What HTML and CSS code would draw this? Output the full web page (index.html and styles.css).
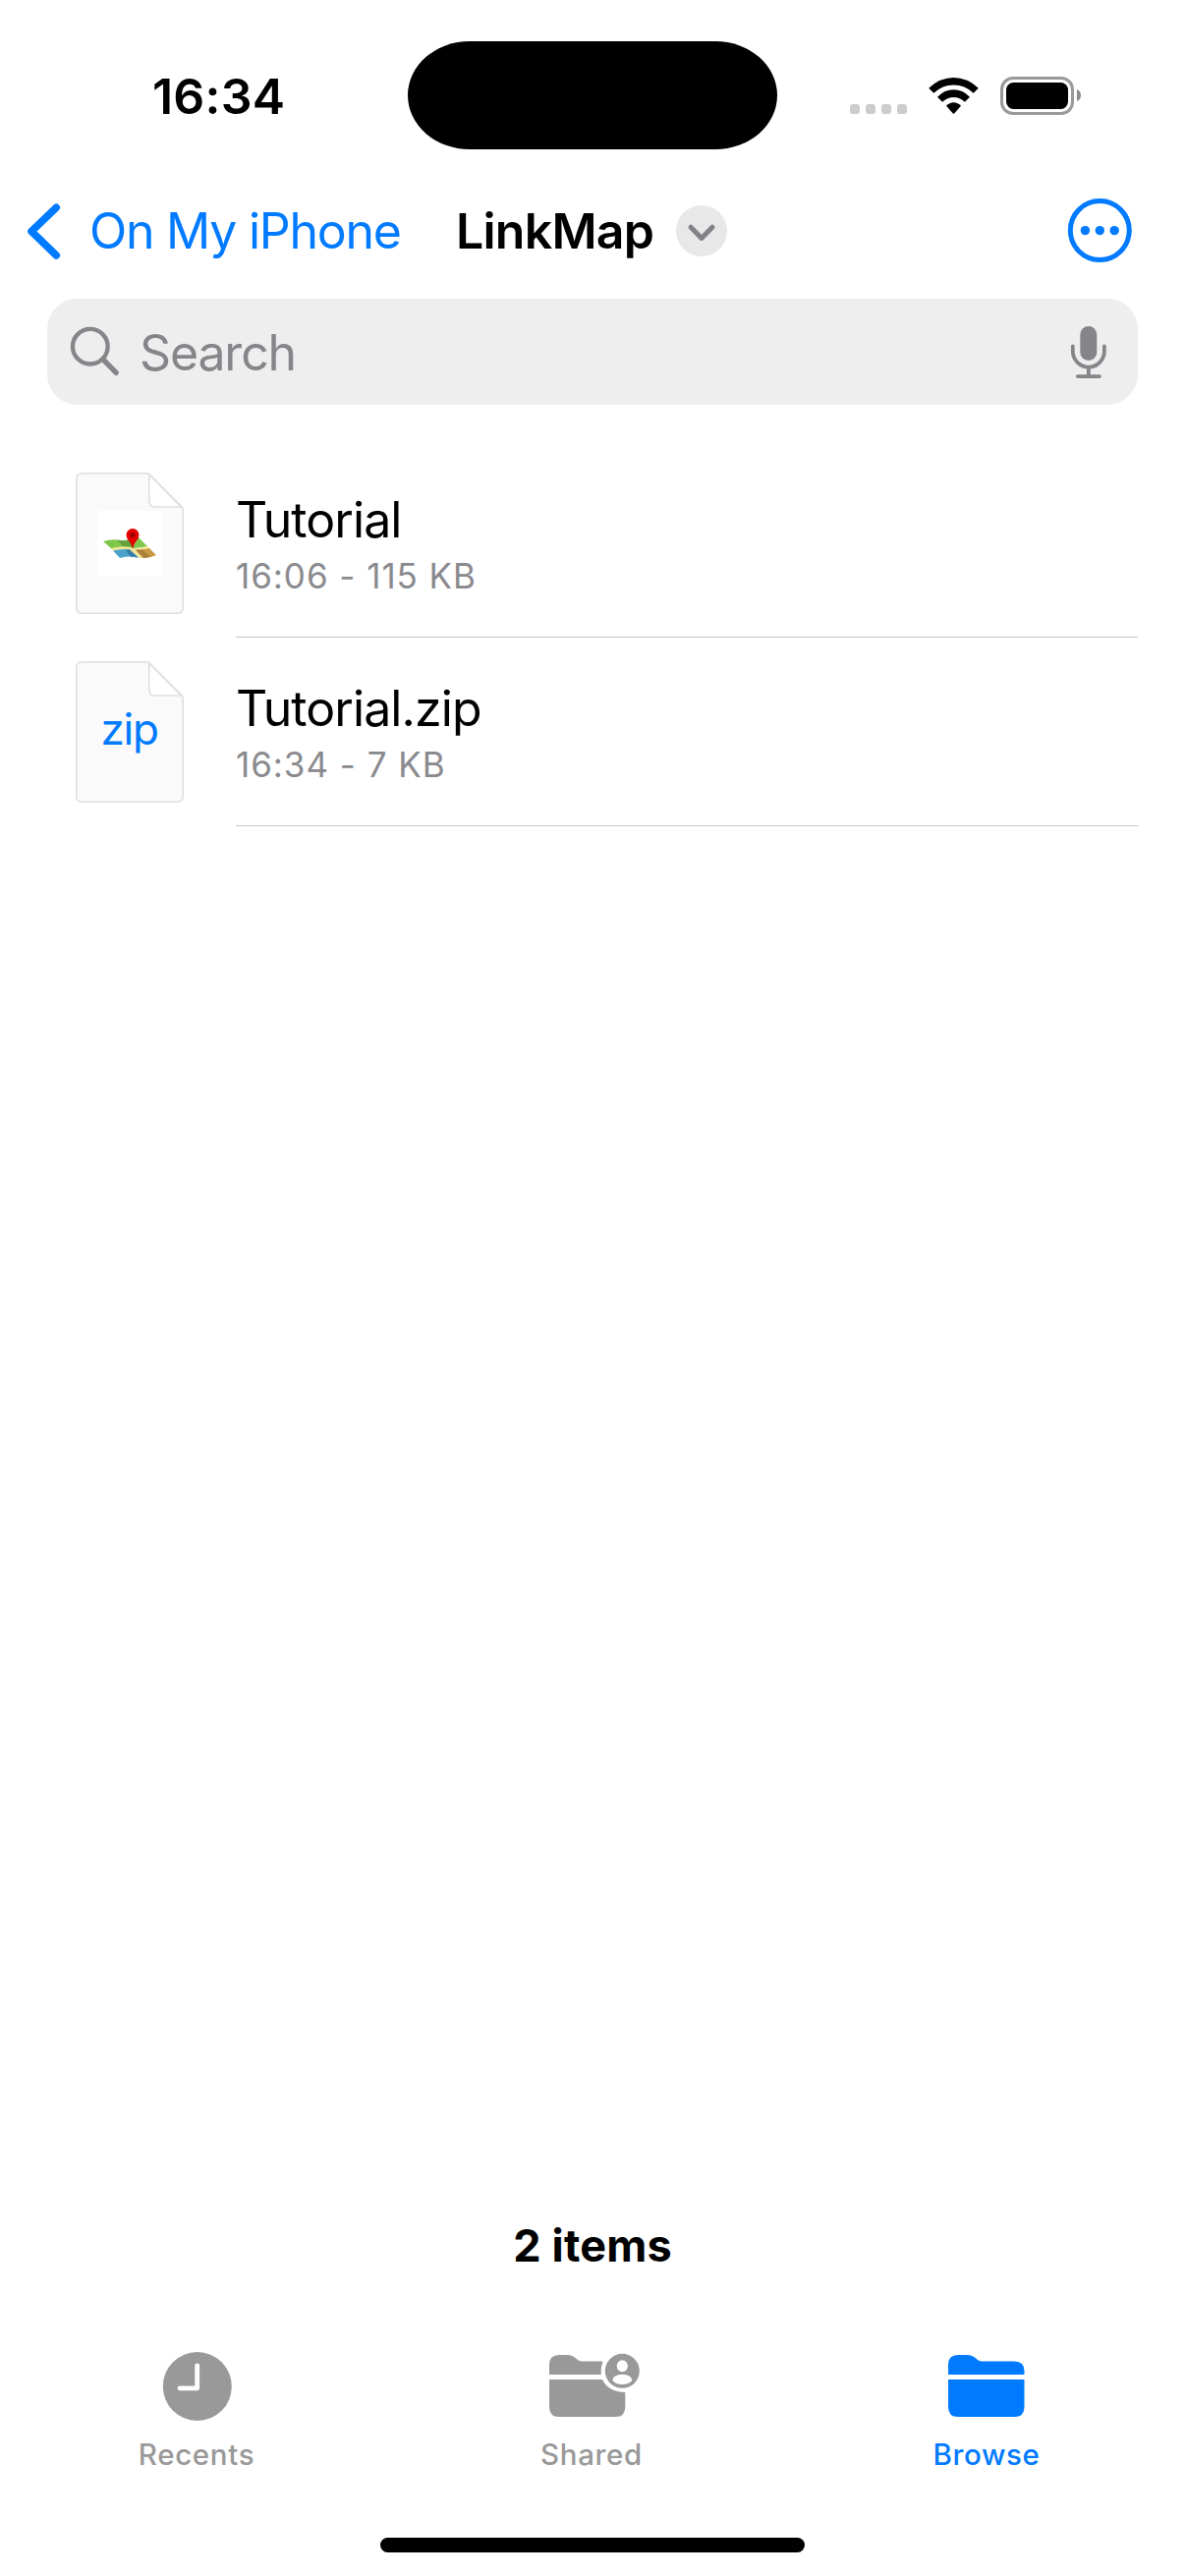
FILE: index.html
```html
<!DOCTYPE html>
<html lang="en">
<head>
<meta charset="utf-8">
<title>LinkMap</title>
<link rel="stylesheet" href="styles.css">
</head>
<body>
<main class="screen">
  <header class="status">
    <div class="time"><span class="clock">16:34</span></div>
    <div class="island"></div>
    <svg class="indicators" width="240" height="50" viewBox="862 72 240 50">
      <g fill="#ccc"><rect x="865" y="106" width="10" height="10" rx="3"/><rect x="881" y="106" width="10" height="10" rx="3"/><rect x="897" y="106" width="10" height="10" rx="3"/><rect x="913" y="106" width="10" height="10" rx="3"/></g>
      <path d="M945.2 89.7Q956.5 79 970.5 79Q984.500 79 995.800 89.700L990.700 94.800Q982 86.500 970.500 86.500Q959 86.500 950.300 94.800Z"/>
      <path d="M954 98.700Q961.200 91.300 970.500 91.300Q979.800 91.300 987 98.700L981.900 103.800Q977 99 970.500 99Q964 99 959.100 103.800Z"/>
      <path d="M963 107.700Q966.200 104.200 970.500 104.200Q974.800 104.200 978 107.700L971.200 115.500Q970.500 116.200 969.800 115.500Z"/>
      <rect x="1019.500" y="79.500" width="72" height="36" rx="11.500" fill="none" stroke="#999" stroke-width="3"/>
      <rect x="1024" y="84" width="63" height="27" rx="7.500"/>
      <path d="M1096 91Q1100 92.500 1100 97Q1100 101.500 1096 103Z" fill="#8c8c8c"/>
    </svg>
  </header>

  <nav class="navbar">
    <svg class="back" width="40" height="64" viewBox="25 202 40 64"><path d="M57.300 210.300 32 234.500 57.300 258.900" fill="none" stroke="#007aff" stroke-width="7.600" stroke-linecap="round" stroke-linejoin="round"/></svg>
    <a class="parent">On My iPhone</a>
    <h1 class="title">LinkMap</h1>
    <svg class="chevron" width="52" height="52" viewBox="0 0 52 52"><circle cx="26" cy="26" r="26" fill="#e8e8e8"/><path d="M15 22.200 26 33.400 37 22.200" fill="none" stroke="#828187" stroke-width="5" stroke-linecap="round" stroke-linejoin="round"/></svg>
    <svg class="more" width="66" height="66" viewBox="0 0 66 66"><circle cx="33.300" cy="32.600" r="30" fill="none" stroke="#007aff" stroke-width="5"/><g fill="#007aff"><circle cx="18.400" cy="32.600" r="4.700"/><circle cx="33.300" cy="32.600" r="4.700"/><circle cx="48.200" cy="32.600" r="4.700"/></g></svg>
  </nav>

  <div class="search">
    <svg width="54" height="56" viewBox="70 330 54 56" fill="none" stroke="#86858a"><circle cx="91.800" cy="352.700" r="17.800" stroke-width="4.300"/><path d="M104.700 365.700 118.200 379.400" stroke-width="5.400" stroke-linecap="round"/></svg>
    <span class="placeholder">Search</span>
    <svg class="mic" width="40" height="58" viewBox="1088 329 40 58"><rect x="1099.300" y="332" width="17" height="35" rx="8.500" fill="#86858a"/><path d="M1091.800 352.500V357.500A16 16 0 0 0 1123.900 357.500V352.500M1107.900 374V382M1096.800 383.100H1119" fill="none" stroke="#86858a" stroke-width="3.800" stroke-linecap="round"/></svg>
  </div>

  <section class="files">
    <article class="file">
      <svg class="doc" width="110" height="144" viewBox="0 0 110 144">
        <path d="M6 .8H72Q74 .8 75.500 2.300L107.500 34.300Q109.200 36 109.200 38.500V137.500Q109.200 143.200 103.500 143.200H6.500Q.8 143.200 .8 137.500V6.500Q.8 .8 6.500 .8Z" fill="#fafafa" stroke="#dfdfdf" stroke-width="1.600"/>
        <path d="M74.800 2V29Q74.800 35 81 35H107.500Z" fill="#fff" stroke="#dfdfdf" stroke-width="1.600"/>
        <rect x="22" y="39" width="66" height="66" fill="#fff"/>
        <path d="M28 70Q36 67.500 42 68.500Q50 70 56 68L64 66 73 75Q64 77.500 57 76.500Q49 75 37 78Z" fill="#7fc74b"/>
        <path d="M42 68.500Q50 70 56 68L60 76.500Q54 74.500 49 76Z" fill="#659f3e"/>
        <path d="M36 77Q48 74 56 76.500Q64 78 73 75L75 77Q66 79.500 61 78.800L69 87H65L55 78.500Q48 77 38 79.500Z" fill="#f0e795"/>
        <path d="M38 79.500Q47 77 55 78.500L64 87Q53 84 45 87Z" fill="#4ba3cc"/>
        <path d="M51 79Q53 78 55 78.500L64 86.500Q60 84.500 56 85.500Z" fill="#347da6"/>
        <path d="M61 78.800Q68 79 75 77L82 84Q76 87 69 87Z" fill="#c89a43"/>
        <path d="M61 78.800 68 78.500 76 86 69 87Z" fill="#a9813a"/>
        <path d="M58 78Q57.500 73 54.200 69.500Q51.500 66.500 51.500 63.500A6.500 6.500 0 0 1 64.500 63.500Q64.500 66.500 61.800 69.500Q58.500 73 58 78Z" fill="#e50000"/><circle cx="58" cy="63.500" r="2.500" fill="#960000"/>
      </svg>
      <div class="details"><div class="name">Tutorial</div><div class="meta">16:06 - 115 KB</div></div>
    </article>
    <article class="file">
      <svg class="doc" width="110" height="144" viewBox="0 0 110 144">
        <path d="M6 .8H72Q74 .8 75.500 2.300L107.500 34.300Q109.200 36 109.200 38.500V137.500Q109.200 143.200 103.500 143.200H6.500Q.8 143.200 .8 137.500V6.500Q.8 .8 6.500 .8Z" fill="#fafafa" stroke="#dfdfdf" stroke-width="1.600"/>
        <path d="M74.800 2V29Q74.800 35 81 35H107.500Z" fill="#fff" stroke="#dfdfdf" stroke-width="1.600"/>
        <text class="zip" x="25.500" y="85">zip</text>
      </svg>
      <div class="details"><div class="name">Tutorial.zip</div><div class="meta">16:34 - 7 KB</div></div>
    </article>
  </section>

  <p class="count">2 items</p>
  <footer class="tabs">
    <div class="tab">
      <svg width="120" height="90" viewBox="140 2384 120 90"><circle cx="200.800" cy="2429" r="35" fill="#999"/><path d="M200.700 2408V2430.800H183" fill="none" stroke="#fff" stroke-width="4.800" stroke-linecap="round" stroke-linejoin="round"/></svg>
      <span>Recents</span>
    </div>
    <div class="tab">
      <svg width="120" height="90" viewBox="542 2384 120 90" fill="#999">
        <path d="M559 2417V2407Q559 2397 569 2397H578Q582 2397 585 2399.500L588 2402Q590 2403.500 593 2403.500H613.500Q611 2410 611.700 2417Z"/>
        <path d="M559 2422H613Q619 2434.500 636.300 2435V2450Q636.300 2460 626.300 2460H569Q559 2460 559 2450Z"/>
        <circle cx="633.300" cy="2413.300" r="17.500"/>
        <g fill="#fff"><ellipse cx="633.300" cy="2408.200" rx="5.600" ry="6"/><path d="M623.300 2423Q624 2417 633.300 2416.800Q642.600 2417 643.300 2423Q640 2427 633.300 2427Q626.600 2427 623.300 2423Z"/></g>
      </svg>
      <span>Shared</span>
    </div>
    <div class="tab active">
      <svg width="120" height="90" viewBox="944 2384 120 90" fill="#007aff"><path d="M965 2417V2407Q965 2397 975 2397H985Q989 2397 992 2399.500L995 2402Q997 2403.500 1000 2403.500H1032.500Q1042.500 2403.500 1042.500 2413.500V2417Z"/><path d="M965 2422H1042.500V2450Q1042.500 2460 1032.500 2460H975Q965 2460 965 2450Z"/></svg>
      <span>Browse</span>
    </div>
  </footer>
  <div class="home"></div>
</main>
</body>
</html>
```

FILE: styles.css
```css
* { box-sizing: border-box; }
body {
  margin: 0;
  background: #fff;
  color: #000;
  font-family: Inter, "Liberation Sans", sans-serif;
}
svg { display: block; flex: none; }
.screen {
  display: flex;
  flex-direction: column;
  width: 1206px;
  height: 2622px;
  overflow: hidden;
}
.status {
  display: flex;
  align-items: center;
  height: 176px;
  padding-top: 18px;
}
.time {
  width: 415px;
  padding: 2px 0 0 155px;
  font-size: 50px;
  font-weight: 600;
  line-height: 60px;
}
.clock { letter-spacing: .2px; }
.island {
  width: 376px;
  height: 110px;
  border-radius: 63px / 55px;
  background: #000;
}
.indicators { margin-left: 71px; }
.navbar {
  display: flex;
  align-items: center;
  height: 118px;
  padding: 0 54px 0 25px;
  font-size: 50px;
  line-height: 60px;
  white-space: nowrap;
}
.parent {
  width: 373px;
  margin-left: 26px;
  color: #007aff;
  letter-spacing: -1.25px;
}
.title {
  width: 224px;
  margin: 0;
  font-size: 50px;
  font-weight: 600;
  letter-spacing: -.75px;
}
.more { margin-left: auto; }
.search {
  display: flex;
  align-items: center;
  height: 108px;
  margin: 10px 48px 0;
  padding: 0 30px 0 22px;
  border-radius: 31px;
  background: #eee;
}
.placeholder {
  margin: 2px 0 0 18px;
  color: #86858a;
  font-size: 50px;
  letter-spacing: -1.15px;
  line-height: 60px;
}
.mic { margin-left: auto; }
.files { margin-top: 45px; }
.file {
  display: flex;
  align-items: center;
  height: 192px;
  padding: 0 48px 0 77px;
}
.details {
  flex: 1;
  height: 192px;
  margin-left: 53px;
  padding-top: 42px;
  border-bottom: 1px solid #c6c6c8;
}
.name {
  font-size: 50px;
  letter-spacing: -.92px;
  line-height: 60px;
}
.meta {
  margin-top: 3px;
  color: #8a8a8e;
  font-size: 35px;
  letter-spacing: .95px;
  line-height: 48px;
}
.zip {
  fill: #007aff;
  font-size: 44px;
  letter-spacing: -1.2px;
}
.count {
  margin: auto 0 0;
  font-size: 45px;
  font-weight: 650;
  letter-spacing: .2px;
  line-height: 54px;
  text-align: center;
}
.tabs {
  display: grid;
  grid-template-columns: repeat(3, 402px);
  margin: 71px 0 0 -1px;
}
.tab {
  display: flex;
  flex-direction: column;
  align-items: center;
  color: #999;
  font-size: 29.5px;
  font-weight: 500;
  letter-spacing: .65px;
  line-height: 36px;
}
.tab span { margin-top: 6px; }
.tab.active { color: #007aff; }
.home {
  width: 432px;
  height: 15px;
  margin: 67px auto 24px;
  border-radius: 8px;
  background: #000;
}
```
